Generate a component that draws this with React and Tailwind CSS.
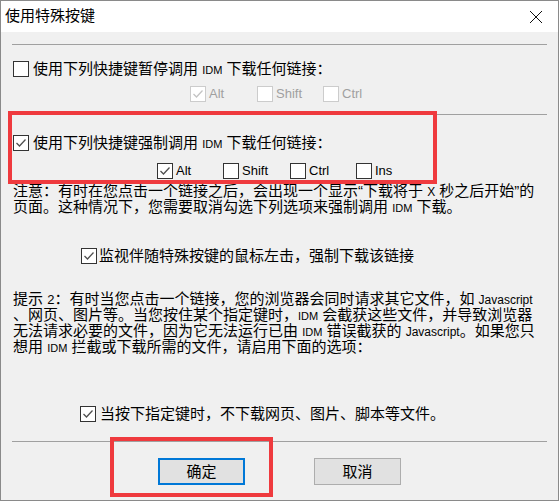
import React from 'react';

const FONT = { fontFamily: '"Liberation Sans", "Noto Sans CJK SC", sans-serif' };

const Box = ({ checked, disabled }) => (
  <span
    className={`w-4 h-4 shrink-0 border bg-white flex items-center justify-center ${disabled ? 'border-[#cccccc]' : 'border-[#333333]'}`}
  >
    {checked && (
      <svg width="14" height="14" viewBox="0 0 14 14">
        <polyline
          points="2.5,7 5.5,10 11.5,3.5"
          fill="none"
          stroke={disabled ? '#c4c4c4' : '#505050'}
          strokeWidth="1.3"
        />
      </svg>
    )}
  </span>
);

const KeyOpt = ({ label, checked, disabled, width }) => (
  <div className={`flex items-center gap-[3px] ${width}`}>
    <Box checked={checked} disabled={disabled} />
    <span className={`text-[13px] leading-4 ${disabled ? 'text-[#a0a0a0]' : 'text-black'}`}>{label}</span>
  </div>
);

const Idm = () => <span className="text-[11px]">IDM</span>;

const Rule = ({ className }) => <div className={`mx-[11px] border-t border-[#a0a0a0] ${className}`} />;

export default function App() {
  return (
    <div className="relative w-[559px] h-[501px] border border-[#8a8a8a] bg-[#f0f0f0] flex flex-col text-black" style={FONT}>
      {/* Title bar */}
      <div className="h-[31px] bg-white flex items-center justify-between pl-[4px] pr-[15px] shrink-0">
        <span className="text-[15px]">使用特殊按键</span>
        <svg width="14" height="14" viewBox="0 0 14 14">
          <path d="M1 1 L13 13 M13 1 L1 13" stroke="#111" strokeWidth="1" />
        </svg>
      </div>

      <div className="flex flex-col text-[15px]">
        <Rule className="mt-[12px]" />

        <div className="mt-[16px] ml-[12px] flex items-center gap-[4px] h-4">
          <Box />
          <span className="leading-4 whitespace-nowrap">使用下列快捷键暂停调用 <Idm /> 下载任何链接：</span>
        </div>

        <div className="mt-[9px] pl-[189px] flex">
          <KeyOpt label="Alt" checked disabled width="w-[67px]" />
          <KeyOpt label="Shift" disabled width="w-[66px]" />
          <KeyOpt label="Ctrl" disabled width="w-[66px]" />
        </div>

        <Rule className="mt-[12px]" />

        <div className="mt-[20px] ml-[12px] flex items-center gap-[4px] h-4">
          <Box checked />
          <span className="leading-4 whitespace-nowrap">使用下列快捷键强制调用 <Idm /> 下载任何链接：</span>
        </div>

        <div className="mt-[12px] pl-[156px] flex">
          <KeyOpt label="Alt" checked width="w-[66px]" />
          <KeyOpt label="Shift" width="w-[67px]" />
          <KeyOpt label="Ctrl" width="w-[66px]" />
          <KeyOpt label="Ins" width="w-[66px]" />
        </div>

        <div className="mt-[4px] ml-[12px] leading-[16px] whitespace-nowrap">
          <div className="h-[16px]">注意：有时在您点击一个链接之后，会出现一个显示“下载将于 <span className="text-[12px]">X</span> 秒之后开始”的</div>
          <div className="h-[16px]">页面。这种情况下，您需要取消勾选下列选项来强制调用 <Idm /> 下载。</div>
        </div>

        <div className="mt-[33px] ml-[80px] flex items-center gap-[2px] h-4">
          <Box checked />
          <span className="leading-4 whitespace-nowrap">监视伴随特殊按键的鼠标左击，强制下载该链接</span>
        </div>

        <div className="mt-[27px] ml-[12px] leading-[16px] whitespace-nowrap">
          <div className="h-[16px]">提示 <span className="text-[13px]">2</span>：有时当您点击一个链接，您的浏览器会同时请求其它文件，如 <span className="text-[12px]">Javascript</span></div>
          <div className="h-[16px]">、网页、图片等。当您按住某个指定键时，<Idm /> 会截获这些文件，并导致浏览器</div>
          <div className="h-[16px]">无法请求必要的文件，因为它无法运行已由 <Idm /> 错误截获的 <span className="text-[12px]">Javascript</span>。如果您只</div>
          <div className="h-[16px]">想用 <Idm /> 拦截或下载所需的文件，请启用下面的选项：</div>
        </div>

        <div className="mt-[51px] ml-[79px] flex items-center gap-[4px] h-4">
          <Box checked />
          <span className="leading-4 whitespace-nowrap">当按下指定键时，不下载网页、图片、脚本等文件。</span>
        </div>

        <Rule className="mt-[19px]" />

        <div className="mt-[16px] flex">
          <button className="ml-[157px] w-[87px] h-[27px] bg-[#e1e1e1] border-2 border-[#0078d7] text-[15px] leading-none">确定</button>
          <button className="ml-[69px] w-[87px] h-[27px] bg-[#e1e1e1] border border-[#adadad] text-[15px] leading-none">取消</button>
        </div>
      </div>

      {/* annotation frames */}
      <div className="absolute left-[7px] top-[110px] w-[429px] h-[73px] border-4 border-[#ef3a3e] pointer-events-none" />
      <div className="absolute left-[109px] top-[436px] w-[163px] h-[60px] border-4 border-[#ef3a3e] pointer-events-none" />
    </div>
  );
}
